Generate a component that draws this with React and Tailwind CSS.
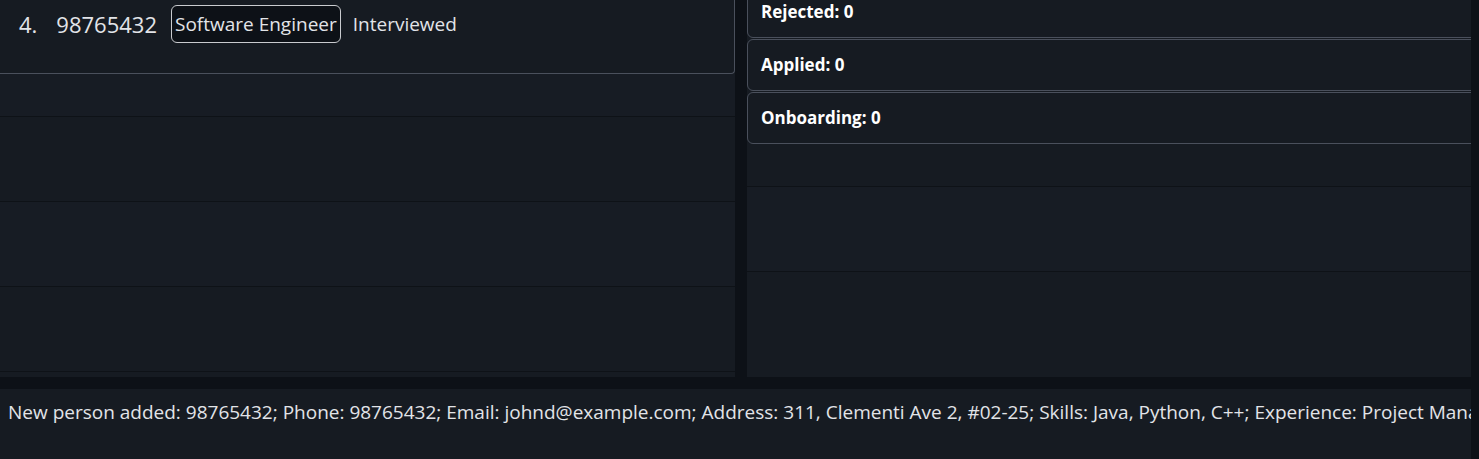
const statusCards = ["Rejected: 0", "Applied: 0", "Onboarding: 0"];

const font = { fontFamily: '"Open Sans", "Noto Sans", sans-serif' };

const PersonCard = () => (
  <div className="h-[74px] -ml-px border border-t-0 border-[#4a505c] rounded-br-sm flex items-start pt-[5px] pl-[19px] text-[#e2e4e8]">
    <span className="text-[22px] leading-[38px]">4.</span>
    <span className="text-[22px] leading-[38px] ml-[19px]">98765432</span>
    <span className="ml-[14px] h-[38px] px-[3px] flex items-center border border-[#c9cbcf] rounded-md bg-[#0d1117] text-[19px]">
      Software Engineer
    </span>
    <span className="ml-[12px] text-[19px] leading-[38px]">Interviewed</span>
  </div>
);

export default function App() {
  return (
    <div
      className="w-[1479px] h-[459px] bg-[#0d1117] flex flex-col gap-3 overflow-hidden"
      style={font}
    >
      <div className="flex gap-3 h-[377px]">
        <div className="w-[735px] bg-[#161b22] overflow-hidden flex flex-col">
          <div className="h-[117px] border-b border-[#0e1217] flex flex-col">
            <PersonCard />
            <div className="flex-1 bg-[#171c24]" />
          </div>
          <div className="h-[85px] border-b border-[#0e1217]" />
          <div className="h-[85px] border-b border-[#0e1217] bg-[#171c24]" />
          <div className="h-[85px] border-b border-[#0e1217]" />
        </div>

        <div className="w-[724px] bg-[#161b22] overflow-hidden flex flex-col">
          <div className="h-[201px] shrink-0 border-b border-[#0e1217] flex flex-col gap-[1px] -mt-[14px]">
            {statusCards.map((label) => (
              <div
                key={label}
                className="h-[52px] shrink-0 -mr-3 border border-[#4a505c] rounded-md flex items-center pl-[13px] text-white text-[17px] font-bold"
              >
                {label}
              </div>
            ))}
          </div>
          <div className="h-[85px] shrink-0 border-b border-[#0e1217] bg-[#171c24]" />
          <div className="flex-1" />
        </div>
      </div>

      <div className="h-[70px] w-[1471px] bg-[#161b22] overflow-hidden pl-2 pt-[9px]">
        <p className="text-[19px] text-[#e2e4e8] whitespace-nowrap">
          New person added: 98765432; Phone: 98765432; Email: johnd@example.com; Address: 311, Clementi Ave 2, #02-25; Skills: Java, Python, C++; Experience: Project Manager at Google
        </p>
      </div>
    </div>
  );
}
